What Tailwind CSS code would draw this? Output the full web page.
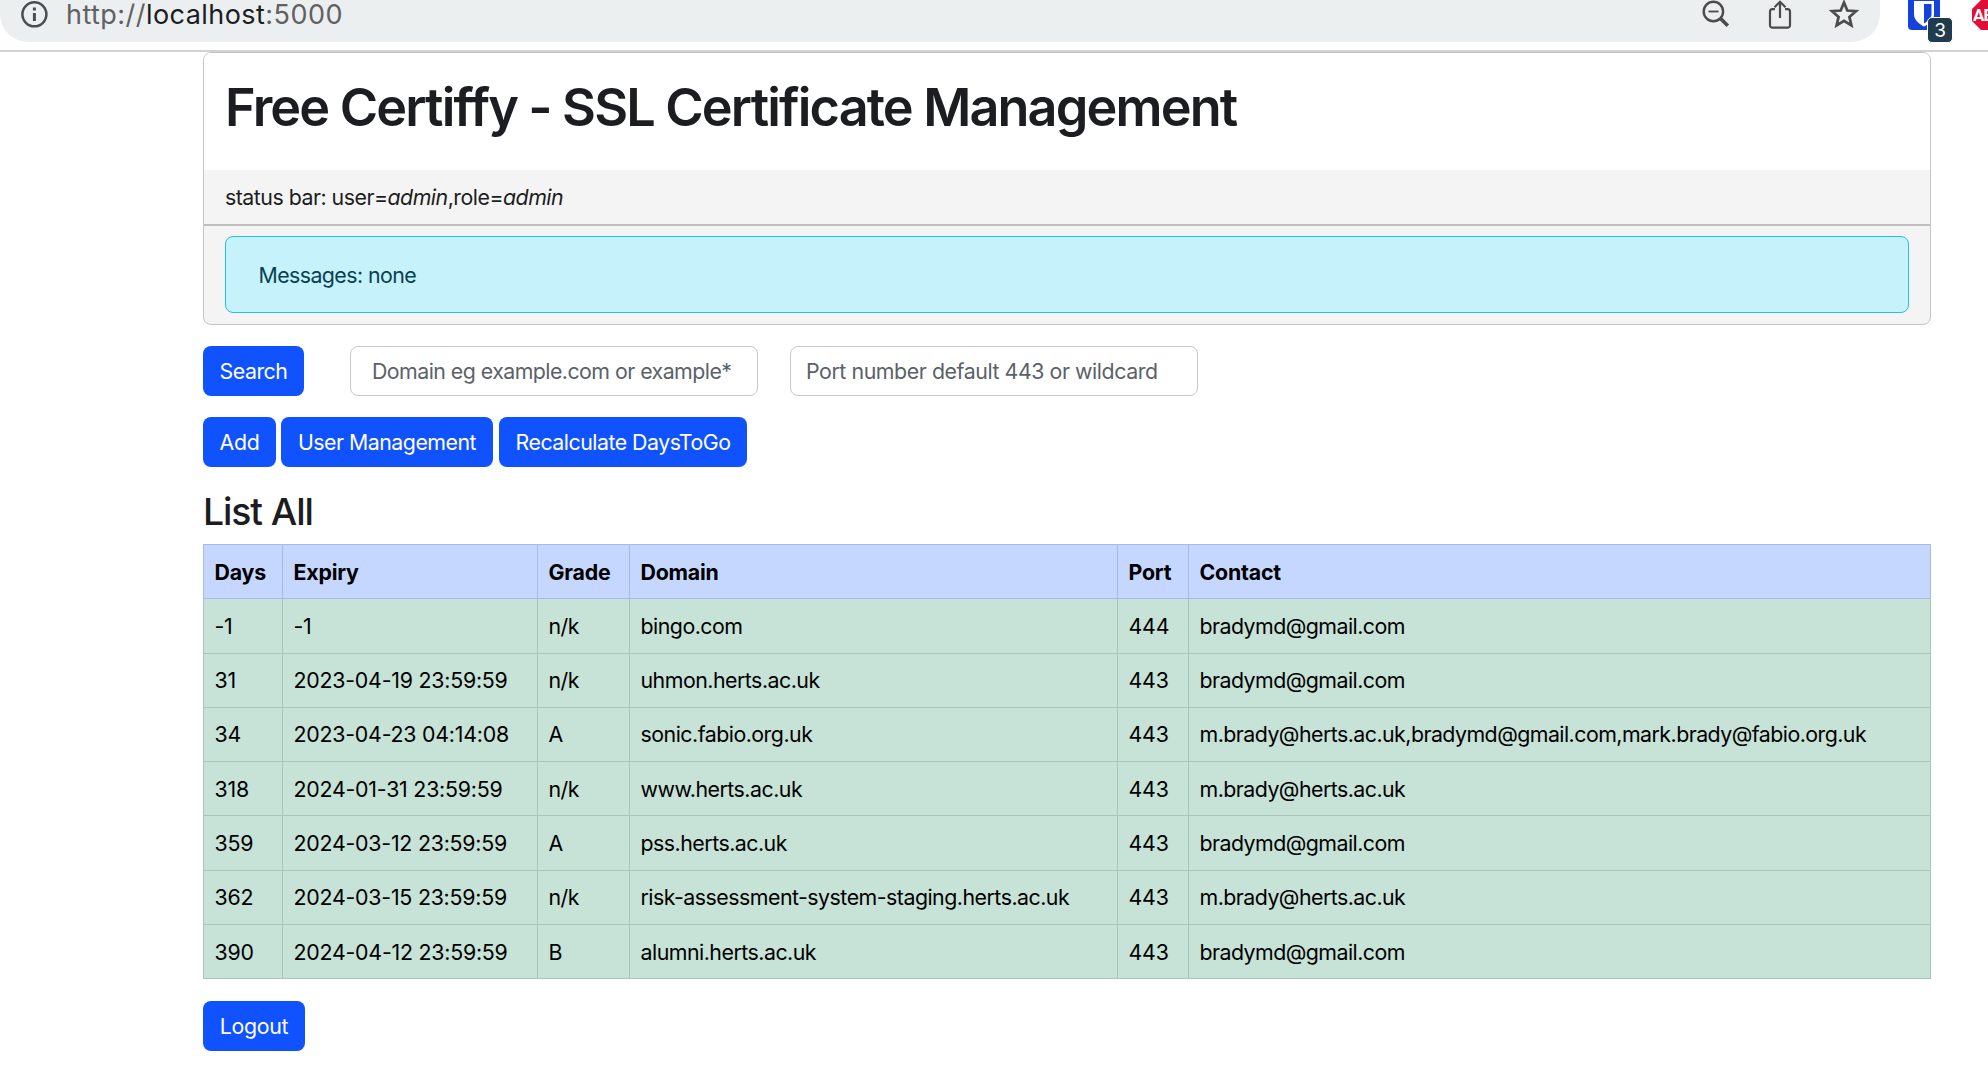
<!DOCTYPE html>
<html lang="en">
<head>
<meta charset="utf-8">
<title>Free Certiffy</title>
<script src="https://cdn.jsdelivr.net/npm/@tailwindcss/browser@4"></script>
</head>
<body class="bg-white w-[1988px] h-[1092px] overflow-hidden font-['Inter',sans-serif] text-[21.33px] leading-8 tracking-[-0.5px] text-[#212529]">
<header class="h-[52px] border-b-2 border-[#d2d2d2] flex items-start">
  <div class="w-[1880px] h-[42px] shrink-0 bg-[#ebeff0] rounded-bl-[28px] rounded-br-[28px] flex items-start relative">
    <svg class="ml-5 mt-0 w-7 h-7 shrink-0" viewBox="0 0 28 28" fill="none" stroke="#4a4e52" stroke-width="2.5"><circle cx="14.4" cy="14.3" r="12"/><path d="M14.4 13v8M14.4 7.5v3" stroke-width="3"/></svg>
    <div class="ml-[18px] -mt-[1px] text-[27px] leading-8 text-[#5f6162] tracking-[0.45px] whitespace-nowrap">http://<span class="text-[#1b1d1f]">localhost</span>:5000</div>
    <svg class="absolute left-[1700px] top-0 w-[160px] h-[32px]" viewBox="0 0 160 32" fill="none" stroke="#4b4b4b" stroke-width="2.4">
      <circle cx="13.400" cy="11.500" r="9.700"/><path d="M8.500 11.500h10" stroke-width="1.800"/><path d="M20 18l7.800 7.800" stroke-width="3.600"/>
      <path d="M75 9.200h-2.500a2.500 2.500 0 0 0-2.500 2.500v13.500a2.500 2.500 0 0 0 2.500 2.500h15a2.500 2.500 0 0 0 2.500-2.500v-13.500a2.500 2.500 0 0 0-2.500-2.500h-2.500M80 18V2M74.500 7.200l5.500-5.500 5.500 5.500" stroke-width="2.200"/>
      <path d="M144 2.500l3.300 8 8.700.7-6.600 5.700 2 8.500-7.400-4.500-7.400 4.500 2-8.500-6.600-5.700 8.700-.7z" stroke-width="2.700"/>
    </svg>
  </div>
  <div class="relative ml-7 w-[32px] h-[30px] bg-[#1443dc] rounded-b-[4px] shrink-0">
    <svg class="w-8 h-[30px]" viewBox="0 0 32 30"><path d="M6 1h20v13c0 6-5 10-10 12.500C11 24 6 20 6 14z" fill="#fff"/><path d="M16 4h7.500v10c0 4-3 7-7.500 9.500z" fill="#1443dc"/></svg>
    <div class="absolute left-[19px] top-[17px] w-[26px] h-[26px] rounded-[5px] border border-white bg-[#203b4d] text-white text-[19px] leading-[26px] text-center tracking-normal">3</div>
  </div>
  <svg class="ml-8 w-4 h-[30px] shrink-0" viewBox="0 0 16 30"><path d="M0 9L9 0H30V30H9L0 21z" fill="#e40d34"/><text x="1" y="20.500" font-family="Roboto" font-weight="700" font-size="17" fill="#fff" letter-spacing="-0.800">AB</text></svg>
</header>
<main class="ml-[203px] w-[1728px]">
  <section class="h-[273px] border border-[#c4c4c4] rounded-lg bg-[#f4f4f4] overflow-hidden">
    <div class="h-[117px] bg-white px-[21px] pt-[22px]"><h1 class="text-[52.2px] leading-[64px] font-semibold text-[#1b1d21] whitespace-nowrap tracking-[-1.85px]">Free Certiffy - SSL Certificate Management</h1></div>
    <div class="h-14 border-b-2 border-[#bebebe] px-[21px] pt-[11px] text-[#1b1d21]">status bar: user=<i>admin</i>,role=<i>admin</i></div>
    <div class="mx-[21px] mt-[10px] h-[77px] border border-[#21bfea] rounded-lg bg-[#c6f2fb] text-[#08414f] px-[32.5px] pt-[22px] tracking-[-0.57px]">Messages: none</div>
  </section>
  <div class="flex mt-[21px] h-[50px] items-stretch">
    <button class="w-[101px] bg-[#0f52fe] text-white rounded-lg">Search</button>
    <div class="ml-[46px] w-[408px] border border-[#c5cad1] rounded-lg pl-[21px] pt-[8px] text-[#5a6269] tracking-[-0.54px]">Domain eg example.com or example*</div>
    <div class="ml-8 w-[408px] border border-[#c5cad1] rounded-lg pl-[15px] pt-[8px] text-[#5a6269] tracking-[-0.43px]">Port number default 443 or wildcard</div>
  </div>
  <div class="flex mt-[21px] h-[50px] text-white">
    <button class="w-[73px] bg-[#0f52fe] rounded-lg tracking-[-0.2px]">Add</button>
    <button class="ml-[5px] w-[212px] bg-[#0f52fe] rounded-lg">User Management</button>
    <button class="ml-[6px] w-[248px] bg-[#0f52fe] rounded-lg">Recalculate DaysToGo</button>
  </div>
  <h2 class="mt-[22px] h-[55px] text-[37.33px] leading-[45px] font-medium text-[#1b1d21] tracking-[-1.1px]">List All</h2>
  <table class="w-[1728px] table-fixed border-collapse text-black whitespace-nowrap">
    <colgroup><col class="w-[79px]"><col class="w-[255px]"><col class="w-[92px]"><col class="w-[488px]"><col class="w-[71px]"><col class="w-[742px]"></colgroup>
    <thead><tr class="h-[54px] bg-[#c5d7ff] text-left font-bold tracking-[-0.2px] [&>th]:border [&>th]:border-[#a9bbe0] [&>th]:pl-[10.5px]"><th>Days</th><th>Expiry</th><th>Grade</th><th>Domain</th><th>Port</th><th>Contact</th></tr></thead>
    <tbody class="bg-[#c7e2d6] [&_td]:border [&_td]:border-[#abc4ba] [&_td]:pl-[10.5px] [&_td:nth-child(-n+2)]:tracking-[-0.22px] [&_td:nth-child(5)]:tracking-[-0.2px] [&_td:nth-child(6)]:tracking-[-0.53px]">
      <tr class="h-[55px]"><td>-1</td><td>-1</td><td>n/k</td><td>bingo.com</td><td>444</td><td>bradymd@gmail.com</td></tr>
      <tr class="h-[54px] [&>td]:pb-[2px]"><td>31</td><td>2023-04-19 23:59:59</td><td>n/k</td><td>uhmon.herts.ac.uk</td><td>443</td><td>bradymd@gmail.com</td></tr>
      <tr class="h-[54px] [&>td]:pb-[2px]"><td>34</td><td>2023-04-23 04:14:08</td><td>A</td><td>sonic.fabio.org.uk</td><td>443</td><td>m.brady@herts.ac.uk,bradymd@gmail.com,mark.brady@fabio.org.uk</td></tr>
      <tr class="h-[54px]"><td>318</td><td>2024-01-31 23:59:59</td><td>n/k</td><td>www.herts.ac.uk</td><td>443</td><td>m.brady@herts.ac.uk</td></tr>
      <tr class="h-[55px]"><td>359</td><td>2024-03-12 23:59:59</td><td>A</td><td>pss.herts.ac.uk</td><td>443</td><td>bradymd@gmail.com</td></tr>
      <tr class="h-[54px] [&>td]:pb-[2px]"><td>362</td><td>2024-03-15 23:59:59</td><td>n/k</td><td>risk-assessment-system-staging.herts.ac.uk</td><td>443</td><td>m.brady@herts.ac.uk</td></tr>
      <tr class="h-[54px]"><td>390</td><td>2024-04-12 23:59:59</td><td>B</td><td>alumni.herts.ac.uk</td><td>443</td><td>bradymd@gmail.com</td></tr>
    </tbody>
  </table>
  <button class="mt-[22px] w-[102px] h-[50px] bg-[#0f52fe] text-white rounded-lg block tracking-[-0.3px]">Logout</button>
</main>
</body>
</html>
